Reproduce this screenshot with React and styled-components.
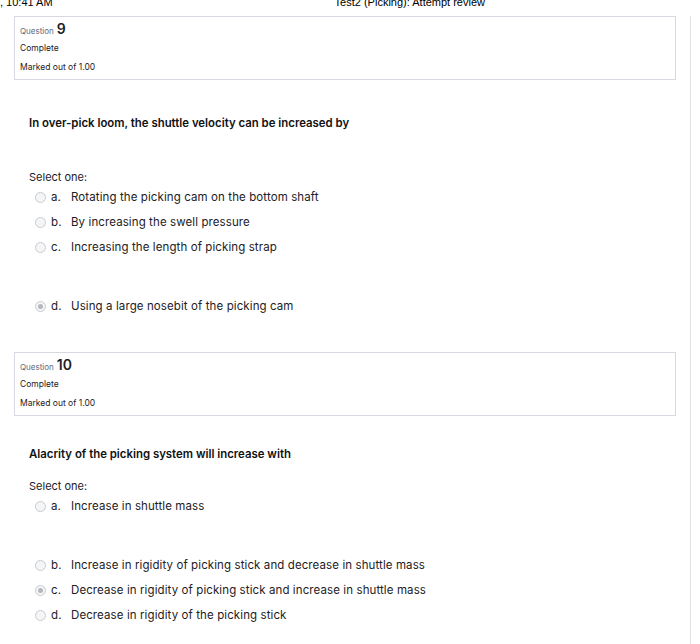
import React from 'react';
import styled, { createGlobalStyle } from 'styled-components';

const GlobalStyle = createGlobalStyle`
  body {
    margin: 0;
    background: #ffffff;
    font-family: Inter, "Open Sans", sans-serif;
    color: #1d2125;
  }
`;

const PrintHeader = styled.div`
  display: flex;
  height: 16px;
  overflow: hidden;
  font-family: "Liberation Sans", Arial, sans-serif;
  font-size: 11px;
  line-height: 11px;
  color: #000;
`;

const HeaderText = styled.span`
  margin-top: -3px;
  margin-left: ${p => p.left || 0}px;
  white-space: nowrap;
`;

const Page = styled.div`
  width: 691px;
  box-sizing: border-box;
  border-right: 1px solid #dee2e6;
  padding: 0 14px 30px 14px;
`;

const InfoBox = styled.div`
  box-sizing: border-box;
  border: 1px solid #d6dae0;
  height: 64px;
  padding: 2px 5px 0 5px;
  display: flex;
  flex-direction: column;
`;

const QNo = styled.div`
  font-size: 8px;
  color: #5b6b7b;
  height: 20px;
  display: flex;
  align-items: baseline;
  padding-top: 1px;
  box-sizing: border-box;

  b {
    font-size: 14px;
    color: #1d2125;
    margin-left: 3px;
    font-weight: 600;
  }
`;

const InfoLine = styled.div`
  font-size: 8.5px;
  height: 19px;
  line-height: 19px;
`;

const Content = styled.div`
  padding: ${p => p.top}px 0 0 15px;
`;

const QText = styled.div`
  font-size: 11.4px;
  font-weight: 600;
  line-height: 14px;
  color: #111;
  margin-bottom: ${p => p.after}px;
`;

const Prompt = styled.div`
  font-size: 11px;
  line-height: 14px;
  margin-bottom: 6px;
`;

const Options = styled.div`
  display: flex;
  flex-direction: column;
  gap: 11px;
  padding-left: 6px;
`;

const Option = styled.label`
  display: flex;
  align-items: center;
  height: 14px;
  font-size: 11.5px;
  letter-spacing: 0.1px;
  margin-top: ${p => (p.spaced ? 34 : 0)}px;
`;

const Radio = styled.span`
  width: 9px;
  height: 9px;
  border-radius: 50%;
  border: 1px solid #c9ccd0;
  background: #f4f5f6;
  display: flex;
  align-items: center;
  justify-content: center;
  margin-right: 5px;

  &::after {
    content: '';
    width: 5px;
    height: 5px;
    border-radius: 50%;
    background: ${p => (p.checked ? '#b4b8bc' : 'transparent')};
  }
`;

const Letter = styled.span`
  width: 20px;
`;

const Spacer = styled.div`
  height: ${p => p.h}px;
`;

const questions = [
  {
    num: 9,
    text: 'In over-pick loom, the shuttle velocity can be increased by',
    top: 36,
    after: 40,
    options: [
      { l: 'a.', t: 'Rotating the picking cam on the bottom shaft' },
      { l: 'b.', t: 'By increasing the swell pressure' },
      { l: 'c.', t: 'Increasing the length of picking strap' },
      { l: 'd.', t: 'Using a large nosebit of the picking cam', spaced: true, checked: true }
    ]
  },
  {
    num: 10,
    text: 'Alacrity of the picking system will increase with',
    top: 31,
    after: 18,
    options: [
      { l: 'a.', t: 'Increase in shuttle mass' },
      { l: 'b.', t: 'Increase in rigidity of picking stick and decrease in shuttle mass', spaced: true },
      { l: 'c.', t: 'Decrease in rigidity of picking stick and increase in shuttle mass', checked: true },
      { l: 'd.', t: 'Decrease in rigidity of the picking stick' }
    ]
  }
];

const Question = ({ q }) => (
  <>
    <InfoBox>
      <QNo>Question<b>{q.num}</b></QNo>
      <InfoLine>Complete</InfoLine>
      <InfoLine>Marked out of 1.00</InfoLine>
    </InfoBox>
    <Content top={q.top}>
      <QText after={q.after}>{q.text}</QText>
      <Prompt>Select one:</Prompt>
      <Options>
        {q.options.map(o => (
          <Option key={o.l} spaced={o.spaced}>
            <Radio checked={o.checked} />
            <Letter>{o.l}</Letter>
            {o.t}
          </Option>
        ))}
      </Options>
    </Content>
  </>
);

export default function App() {
  return (
    <>
      <GlobalStyle />
      <PrintHeader>
        <HeaderText left={0}>, 10:41 AM</HeaderText>
        <HeaderText left={282}>Test2 (Picking): Attempt review</HeaderText>
      </PrintHeader>
      <Page>
        <Question q={questions[0]} />
        <Spacer h={39} />
        <Question q={questions[1]} />
      </Page>
    </>
  );
}
